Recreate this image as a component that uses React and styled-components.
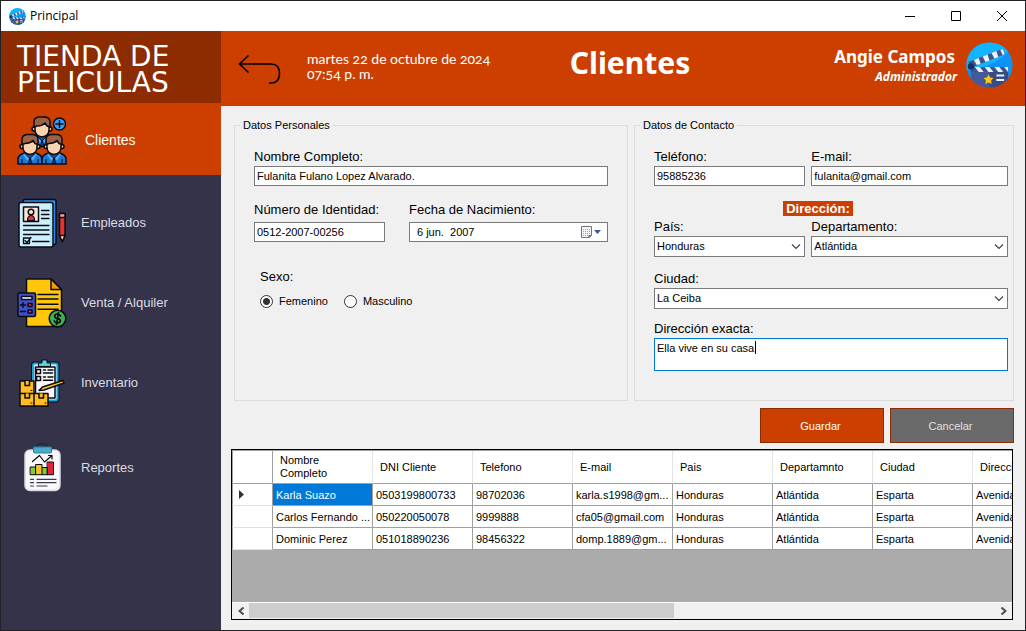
import React, { useState } from 'react';
import styled, { createGlobalStyle, css } from 'styled-components';

const orange = '#cc3f00';
const brown = '#8c2c00';
const navy = '#34334a';
const sans = '"Liberation Sans", Arial, sans-serif';
const humanist = '"Noto Sans", "Open Sans", sans-serif';

const GlobalStyle = createGlobalStyle`
  *, *::before, *::after { box-sizing: border-box; }
  body { margin: 0; background: #f0f0f0; color: #000; font: 11px/14px ${sans}; }
  button, input, select, textarea { font: inherit; color: inherit; margin: 0; border-radius: 0; }
`;

const Window = styled.div`
  display: flex;
  flex-direction: column;
  min-height: 100vh;
  border: 1px solid #222126;
`;

const TitleBar = styled.div`
  display: flex;
  align-items: center;
  height: 30px;
  padding-left: 8px;
  gap: 4px;
  background: #fff;
  font: 12px/16px "Open Sans", sans-serif;
`;

const WindowTitle = styled.span`
  flex: 1;
`;

const WindowControls = styled.div`
  display: flex;
`;

const WindowButton = styled.button`
  display: grid;
  place-items: center;
  width: 46px;
  height: 30px;
  padding: 0;
  border: 0;
  background: none;
`;

const Shell = styled.div`
  display: flex;
  flex: 1;
`;

const Sidebar = styled.aside`
  flex: none;
  width: 220px;
  background: ${navy};
`;

const Brand = styled.div`
  display: flex;
  align-items: center;
  height: 72px;
  padding: 6px 16px 0;
  background: ${brown};
  color: #fff;
  font: 28px/26px "DejaVu Sans", sans-serif;
`;

const NavList = styled.nav`
  display: flex;
  flex-direction: column;
`;

const NavLink = styled.a`
  display: flex;
  align-items: center;
  gap: 14px;
  height: ${(p) => p.$height}px;
  padding-left: 16px;
  color: #dcdce2;
  font-size: 13px;
  line-height: 16px;
  text-decoration: none;
  ${(p) =>
    p.$active &&
    css`
      gap: 18px;
      margin-bottom: 8px;
      padding-top: 2px;
      background: ${orange};
      color: #fff;
      font-size: 14px;
    `}
`;

const Main = styled.main`
  display: flex;
  flex: 1;
  flex-direction: column;
  min-width: 0;
  background: #f0f0f0;
`;

const Header = styled.header`
  display: grid;
  grid-template-columns: 1fr auto 1fr;
  align-items: center;
  height: 75px;
  padding-left: 14px;
  background: ${orange};
  color: #fff;
  font-family: ${humanist};
`;

const HeaderStart = styled.div`
  display: flex;
  align-items: center;
  gap: 24px;
`;

const BackButton = styled.button`
  display: flex;
  padding: 2px;
  border: 0;
  background: none;
`;

const DateText = styled.time`
  padding-bottom: 6px;
  font: 14px/15px Lato, sans-serif;
  font-variant-numeric: oldstyle-nums;
`;

const PageTitle = styled.h1`
  margin: 0;
  padding-bottom: 12px;
  font-size: 30px;
  line-height: 36px;
`;

const UserBlock = styled.div`
  display: flex;
  align-items: center;
  justify-content: flex-end;
  gap: 9px;
  padding: 0 12px 8px 0;
`;

const UserText = styled.div`
  padding-top: 2px;
  text-align: right;
`;

const UserName = styled.div`
  padding-right: 2px;
  font-size: 17px;
  font-weight: 700;
  line-height: 22px;
`;

const UserRole = styled.div`
  font-size: 12px;
  font-style: italic;
  font-weight: 700;
  line-height: 18px;
`;

const Form = styled.form`
  padding: 12px 11px 6px 13px;
`;

const Groups = styled.div`
  display: grid;
  grid-template-columns: minmax(0, 394fr) minmax(0, 380fr);
  gap: 6px;
`;

const Group = styled.fieldset`
  min-width: 0;
  margin: 0;
  padding: 16px ${(p) => p.$right}px 29px 19px;
  border: 1px solid #dcdcdc;
`;

const GroupLegend = styled.legend`
  margin-left: -14px;
  padding: 0 3px;
  line-height: 14px;
`;

const FieldRow = styled.div`
  display: grid;
  grid-template-columns: ${(p) => p.$columns || '1fr'};
  column-gap: ${(p) => p.$gap || 0}px;
  margin-top: ${(p) => p.$top || 0}px;
`;

const Field = styled.div`
  display: flex;
  flex-direction: column;
  min-width: 0;
  gap: ${(p) => p.$gap || 0}px;
`;

const Label = styled.label`
  font-size: 13px;
  line-height: 18px;
`;

const control = css`
  width: 100%;
  border: 1px solid #7a7a7a;
  background: #fff;
  outline: 0;
`;

const TextInput = styled.input`
  ${control}
  height: 20px;
  padding: 0 2px;
`;

const DateBox = styled.div`
  ${control}
  display: flex;
  align-items: center;
  height: 20px;
`;

const DateInput = styled.input`
  flex: 1;
  min-width: 0;
  padding: 0 7px;
  border: 0;
  background: none;
  outline: 0;
`;

const CalendarButton = styled.button`
  display: flex;
  align-items: center;
  padding: 0 5px;
  border: 0;
  background: none;
`;

const SelectBox = styled.div`
  position: relative;
  svg {
    position: absolute;
    right: 4px;
    top: 8px;
    pointer-events: none;
  }
`;

const Select = styled.select`
  ${control}
  display: block;
  height: 21px;
  padding: 0 2px 1px;
  appearance: none;
`;

const AreaBox = styled.div`
  position: relative;
  display: flex;
`;

const TextArea = styled.textarea`
  ${control}
  height: 33px;
  padding: 2px;
  border-color: #0078d7;
  resize: none;
  caret-color: transparent;
`;

const Caret = styled.span`
  position: absolute;
  left: 101px;
  top: 3px;
  width: 1px;
  height: 13px;
  background: #000;
`;

const AddressRow = styled.div`
  display: flex;
  justify-content: center;
  padding-right: 26px;
  margin: 15px 0 2px;
`;

const AddressTitle = styled.span`
  padding: 0 3px;
  background: ${orange};
  color: #fff;
  font-size: 13px;
  font-weight: 700;
  line-height: 15px;
`;

const RadioGroup = styled.div`
  display: flex;
  flex-direction: column;
  gap: 8px;
  margin-top: 26px;
  padding-left: 6px;
`;

const RadioTitle = styled.span`
  font-size: 13px;
  line-height: 18px;
`;

const RadioRow = styled.div`
  display: flex;
  gap: 16px;
`;

const RadioLabel = styled.label`
  display: flex;
  align-items: center;
  gap: 6px;
`;

const Radio = styled.input`
  appearance: none;
  width: 13px;
  height: 13px;
  border: 1px solid #333;
  border-radius: 50%;
  background: #fff;
  &:checked {
    background: radial-gradient(circle, #333 3px, #fff 4px);
  }
`;

const Actions = styled.div`
  display: flex;
  justify-content: flex-end;
  gap: 6px;
  margin-top: 7px;
`;

const ActionButton = styled.button`
  width: 124px;
  height: 35px;
  padding: 0 9px 0 6px;
  border: 1px solid ${brown};
  background: ${(p) => (p.$muted ? '#696969' : orange)};
  color: ${(p) => (p.$muted ? '#e0e0e0' : '#fff')};
`;

const Grid = styled.section`
  display: flex;
  flex: 1;
  flex-direction: column;
  margin: 0 12px 10px 10px;
  border: 1px solid #000;
  background: #ababab;
`;

const GridViewport = styled.div`
  flex: 1;
  overflow: hidden;
  border-top: 1px solid #a0a0a0;
`;

const Table = styled.table`
  width: 841px;
  border-collapse: separate;
  border-spacing: 0;
  table-layout: fixed;
`;

const HeadCell = styled.th`
  height: 33px;
  padding: 0 7px;
  border-right: 1px solid #e2e2e2;
  border-bottom: 1px solid #a0a0a0;
  background: #fff;
  font-weight: 400;
  line-height: 13px;
  text-align: left;
`;

const MarkerCell = styled.td`
  width: 41px;
  height: 22px;
  padding: 0 6px;
  border: solid #a0a0a0;
  border-width: 0 1px 1px 1px;
  border-bottom-color: ${(p) => (p.$strong ? '#a0a0a0' : '#e2e2e2')};
  background: #fff;
  svg { display: block; }
`;

const Cell = styled.td`
  height: 22px;
  padding: 0 3px;
  overflow: hidden;
  border: solid #a0a0a0;
  border-width: 0 1px 1px 0;
  background: ${(p) => (p.$selected ? '#0078d7' : '#fff')};
  color: ${(p) => (p.$selected ? '#fff' : '#000')};
  white-space: nowrap;
`;

const ScrollBar = styled.div`
  display: flex;
  height: 17px;
  border-top: 1px solid #fff;
  background: #f0f0f0;
`;

const ScrollButton = styled.button`
  display: grid;
  flex: none;
  place-items: center;
  width: 17px;
  padding: 0;
  border: 0;
  background: none;
`;

const ScrollTrack = styled.div`
  flex: 1;
  padding-bottom: 1px;
`;

const ScrollThumb = styled.div`
  width: 57%;
  height: 100%;
  background: #cdcdcd;
`;

function ClapperIcon({ width, height }) {
  return (
    <svg width={width} height={height} viewBox="0 0 48 46" preserveAspectRatio="none" aria-hidden="true">
      <defs>
        <clipPath id={`disc${width}`}><ellipse cx="24" cy="23" rx="23.6" ry="22.6" /></clipPath>
      </defs>
      <g clipPath={`url(#disc${width})`}>
        <path fill="#0c93f5" d="M0 0h48v46H0z" />
        <path fill="#12b4ff" d="M0 0h48C44 15 24 26 0 28z" />
        <path fill="#3e548f" d="M2 20 37 7l3 5L6 25.500z" />
        <path fill="#e8f3fb" d="m8 18 5-2 2 6-4 1zM17 14.500l5-2 2 6-4 1.500zM26 11l5-2 2 6-4 1.500zM35 8l2.500-1 2 5-2 1z" />
        <path fill="#46599a" d="M5 25h38v22H5z" />
        <path fill="#394b82" d="M24 30h19v17H24z" />
        <path fill="#3e548f" d="M5 25h38v5H5z" />
        <path fill="#e8f3fb" d="M9 25h5l4 5h-5zM19 25h5l4 5h-5zM29 25h5l4 5h-5zM39 25h4v5z" />
        <circle cx="5" cy="24.500" r="3.200" fill="#1d2f5c" />
        <path fill="#ffc90e" d="m23 32.500 1.600 3 3.400.5-2.400 2.500.6 3.500-3.200-1.500-3.200 1.500.6-3.500-2.400-2.500 3.400-.5z" />
        <path stroke="#e8f3fb" strokeWidth="2" d="M31 33.500h8M31 38h8" />
      </g>
    </svg>
  );
}

const Icon = ({ children }) => (
  <svg width="50" height="50" viewBox="0 0 50 50" fill="none" stroke="#0b0b14" strokeWidth="1.500" strokeLinejoin="round" strokeLinecap="round" aria-hidden="true">
    {children}
  </svg>
);

const Person = ({ x, y }) => (
  <g transform={`translate(${x} ${y})`}>
    <path fill="#1f78d8" d="M-12 29.500V25q0-4 4-5.500l5-2H3l5 2q4 1.500 4 5.500v4.500z" />
    <path fill="#55aaf5" stroke="none" d="m-4 18 4 6 4-6 3 2-4 6-3-3-3 3-4-6z" />
    <path fill="#0f55a8" strokeWidth="1" d="m-5 19 5 5 5-5M0 24l-1.500 5h3zM-8 25v4M8 25v4" />
    <circle cx="-8" cy="12" r="2" fill="#f0b98d" />
    <circle cx="8" cy="12" r="2" fill="#f0b98d" />
    <path fill="#fbd3ae" d="M-7 7H7v6q0 6-7 7-7-1-7-7z" />
    <path fill="#9a6240" d="M-8 10V5q0-4.500 5-5h6q5 .5 5 5v5l-3-1-2-3q-3 3-8 3z" />
  </g>
);

const ClientsIcon = () => (
  <Icon>
    <Person x={25} y={2} />
    <Person x={13} y={19.500} />
    <Person x={37} y={19.500} />
    <circle cx="42.500" cy="9" r="6" fill="#36a0f5" />
    <path d="M42.500 5.500v7M39 9h7" />
  </Icon>
);

const EmployeesIcon = () => (
  <Icon>
    <rect x="6" y="1.500" width="33" height="45" rx="2" fill="#2f8fee" />
    <rect x="2" y="4.500" width="34" height="44.500" rx="2" fill="#cdf0fb" />
    <path stroke="#a5dcf2" d="M34 6.500v40" />
    <path fill="#fde4d3" d="M6.500 9h15v14.500h-15z" />
    <path fill="#e0303a" strokeWidth="1.200" d="M10.500 22.500q0-5 3.500-5t3.500 5z" />
    <circle cx="14" cy="14" r="2.800" fill="#fde4d3" />
    <path strokeWidth="1.300" d="M24.500 12.500H32M24.500 16.500H32M24.500 20.500H32M6.500 27.500H32M6.500 32H32M6.500 36.500H32M15.500 43.500H32M6.500 40h6v5.500h-6zM8 42.500l2 2 4-5" />
    <path fill="#e3342f" d="M42.500 15.500h5.500v22l-2.700 6-2.800-6z" />
    <path fill="#f7a3a0" d="M42.500 15.500h5.500v4h-5.500z" />
    <path fill="#fde4d3" d="M42.500 37.500h5.500l-2.700 6z" />
  </Icon>
);

const SalesIcon = () => (
  <Icon>
    <path fill="#ffc60a" d="M9.500 1h24.500l10.500 10.500V48.500h-35z" />
    <path fill="#f59a0c" d="M34 1v10.500h10.500z" />
    <path d="M21 16.500h20M21 21h20M21 26.300h20M21 31.300h20" />
    <rect x="1" y="15" width="17.500" height="23.500" rx="1.500" fill="#3f51c4" />
    <path fill="#fff" d="M4.500 18.500h10.500v3H4.500z" />
    <path d="M3.500 27h5M6 24.800v4.400M3.500 33.500h5" />
    <rect x="11" y="25.500" width="4" height="3" fill="#ee2a6a" />
    <rect x="11" y="32" width="4" height="3" fill="#ee2a6a" />
    <circle cx="40.500" cy="40.500" r="8.300" fill="#3bb54a" />
    <path strokeWidth="1.700" d="M43.500 38q-1-2-3-2-2.800 0-2.800 2.300 0 1.900 2.800 2.200t2.800 2.300Q43.300 45 40.500 45q-2.300 0-3.200-2M41.500 34.500l-2 12" />
  </Icon>
);

const InventoryIcon = () => (
  <Icon>
    <rect x="16" y="5.500" width="24.500" height="37" rx="2" strokeWidth="4" />
    <rect x="16" y="5.500" width="24.500" height="37" rx="2" fill="#f2f2f6" stroke="#12a5de" strokeWidth="2" />
    <path fill="#f7f7fa" d="M18.500 9H38v31H18.500z" />
    <path fill="#62d8dc" strokeWidth="1" d="M21.500 8V5h3.500V2h5v3h3.500v3z" />
    <path d="M19.500 11.500h4v4h-4zM19.500 18.500h4v4h-4zM26.500 12h2M31 12h5M26.500 15h9M26.500 19h2M31 19h5M26.500 22.300h9" />
    <g fill="#ffbd1f">
      <path d="M3 23h14v12.500H3zM3 35.500h14V48H3zM17 35.500h14V48H17z" />
      <path d="M8 23v4.500h4.500V23M8 35.500V40h4.500v-4.500M22 35.500V40h4.500v-4.500" />
    </g>
    <path strokeWidth="1" d="M14 32.500h1M14 45h1M28 45h1" />
    <path fill="#ffc61f" d="m22 32.500 3.500-3.500L46 22.500l1 2.500-20 7z" />
  </Icon>
);

const ReportsIcon = () => (
  <Icon>
    <path stroke="#24233a" d="M20 3q0-2.500 5-2.500T30 3" />
    <rect x="8" y="7" width="35" height="40.500" rx="5" fill="#f8f8fb" stroke="#d8d8e0" />
    <rect x="16.500" y="4" width="18" height="6" rx="1" fill="#4aaccb" stroke="#2c7f9b" strokeWidth="1" />
    <path strokeWidth="1.200" d="m15.500 18.500 7-6 5 6.500 7.500-6.500M31.500 12.500H35V16" />
    <g strokeWidth="1">
      <path fill="#83cf2a" d="M13.500 24h5.500v7.700h-5.500zM25 24.500h5.500v7.200H25z" />
      <path fill="#fbc01e" d="M19 21.500h6v10.200h-6z" />
      <path fill="#e8203c" d="M30.500 19h6v12.700h-6z" />
    </g>
    <path stroke="#3a3a48" strokeWidth="1.200" d="M13.500 36.300h3M20 36.300h19M13.500 39.700h3M20 39.700h19M13.500 43h3M20 43h10" />
  </Icon>
);

const Chevron = () => (
  <svg width="10" height="6" viewBox="0 0 10 6" fill="none" stroke="#444" strokeWidth="1.200" aria-hidden="true">
    <path d="m1 .5 4 4 4-4" />
  </svg>
);

const navItems = [
  { label: 'Clientes', icon: ClientsIcon, height: 72, active: true },
  { label: 'Empleados', icon: EmployeesIcon, height: 80 },
  { label: 'Venta / Alquiler', icon: SalesIcon, height: 80 },
  { label: 'Inventario', icon: InventoryIcon, height: 80 },
  { label: 'Reportes', icon: ReportsIcon, height: 90 },
];

const columns = ['Nombre Completo', 'DNI Cliente', 'Telefono', 'E-mail', 'Pais', 'Departamnto', 'Ciudad', 'Dirección'];

const rows = [
  ['Karla Suazo', '0503199800733', '98702036', 'karla.s1998@gm...', 'Honduras', 'Atlántida', 'Esparta', 'Avenida'],
  ['Carlos Fernando ...', '050220050078', '9999888', 'cfa05@gmail.com', 'Honduras', 'Atlántida', 'Esparta', 'Avenida'],
  ['Dominic Perez', '051018890236', '98456322', 'domp.1889@gm...', 'Honduras', 'Atlántida', 'Esparta', 'Avenida'],
];

function TextField({ id, label, value, type = 'text', gap }) {
  return (
    <Field $gap={gap}>
      <Label htmlFor={id}>{label}</Label>
      <TextInput id={id} type={type} defaultValue={value} />
    </Field>
  );
}

function SelectField({ id, label, value }) {
  return (
    <Field>
      <Label htmlFor={id}>{label}</Label>
      <SelectBox>
        <Select id={id} defaultValue={value}>
          <option>{value}</option>
        </Select>
        <Chevron />
      </SelectBox>
    </Field>
  );
}

export default function App() {
  const [sex, setSex] = useState('Femenino');
  return (
    <Window>
      <GlobalStyle />
      <TitleBar>
        <ClapperIcon width={17} height={17} />
        <WindowTitle>Principal</WindowTitle>
        <WindowControls>
          <WindowButton aria-label="Minimizar">
            <svg width="10" height="10" stroke="#000"><path d="M0 5.500h10" /></svg>
          </WindowButton>
          <WindowButton aria-label="Maximizar">
            <svg width="10" height="10" fill="none" stroke="#000"><path d="M.5.5h9v9h-9z" /></svg>
          </WindowButton>
          <WindowButton aria-label="Cerrar">
            <svg width="10" height="10" stroke="#000"><path d="m0 0 10 10M10 0 0 10" /></svg>
          </WindowButton>
        </WindowControls>
      </TitleBar>
      <Shell>
        <Sidebar>
          <Brand>TIENDA DE PELICULAS</Brand>
          <NavList>
            {navItems.map(({ label, icon: NavIcon, height, active }) => (
              <NavLink key={label} href="#" $height={height} $active={active}>
                <NavIcon />
                {label}
              </NavLink>
            ))}
          </NavList>
        </Sidebar>
        <Main>
          <Header>
            <HeaderStart>
              <BackButton aria-label="Regresar">
                <svg width="44" height="30" viewBox="0 0 44 30" fill="none" stroke="#000" strokeWidth="1.600">
                  <path d="M11.500 1.500 2.500 10l9 8.500M2.500 10H34q8.500 0 8.500 9.500t-8.500 9.500h-2" />
                </svg>
              </BackButton>
              <DateText>
                martes 22 de octubre de 2024
                <br />
                07:54 p. m.
              </DateText>
            </HeaderStart>
            <PageTitle>Clientes</PageTitle>
            <UserBlock>
              <UserText>
                <UserName>Angie Campos</UserName>
                <UserRole>Administrador</UserRole>
              </UserText>
              <ClapperIcon width={47} height={46} />
            </UserBlock>
          </Header>
          <Form onSubmit={(e) => e.preventDefault()}>
            <Groups>
              <Group $right={19}>
                <GroupLegend>Datos Personales</GroupLegend>
                <TextField id="name" label="Nombre Completo:" value="Fulanita Fulano Lopez Alvarado." />
                <FieldRow $columns="131fr 199fr" $gap={24} $top={15}>
                  <TextField id="dni" label="Número de Identidad:" value="0512-2007-00256" gap={3} />
                  <Field $gap={3}>
                    <Label htmlFor="birth">Fecha de Nacimiento:</Label>
                    <DateBox>
                      <DateInput id="birth" type="text" defaultValue="6 jun.  2007" />
                      <CalendarButton type="button" aria-label="Abrir calendario">
                        <svg width="22" height="13" fill="none">
                          <path fill="#f4f4f8" stroke="#776f72" d="M1.500.5h10v9l-2 2h-8z" />
                          <path stroke="#9aa6c4" strokeDasharray="1 1" d="M3 3.500h7M3 5.500h7M3 7.500h7M3 9.500h5" />
                          <path fill="#776f72" d="M8.500 12V9H12z" />
                          <path fill="#3b5998" d="M14 4h7l-3.500 4z" />
                        </svg>
                      </CalendarButton>
                    </DateBox>
                  </Field>
                </FieldRow>
                <RadioGroup role="radiogroup" aria-labelledby="sex">
                  <RadioTitle id="sex">Sexo:</RadioTitle>
                  <RadioRow>
                    {['Femenino', 'Masculino'].map((option) => (
                      <RadioLabel key={option}>
                        <Radio type="radio" name="sex" checked={sex === option} onChange={() => setSex(option)} />
                        {option}
                      </RadioLabel>
                    ))}
                  </RadioRow>
                </RadioGroup>
              </Group>
              <Group $right={5}>
                <GroupLegend>Datos de Contacto</GroupLegend>
                <FieldRow $columns="10fr 13fr" $gap={6}>
                  <TextField id="phone" type="tel" label="Teléfono:" value="95885236" />
                  <TextField id="email" type="email" label="E-mail:" value="fulanita@gmail.com" />
                </FieldRow>
                <AddressRow>
                  <AddressTitle>Dirección:</AddressTitle>
                </AddressRow>
                <FieldRow $columns="10fr 13fr" $gap={6}>
                  <SelectField id="country" label="País:" value="Honduras" />
                  <SelectField id="state" label="Departamento:" value="Atlántida" />
                </FieldRow>
                <FieldRow $top={13}>
                  <SelectField id="city" label="Ciudad:" value="La Ceiba" />
                </FieldRow>
                <FieldRow $top={11}>
                  <Field>
                    <Label htmlFor="address">Dirección exacta:</Label>
                    <AreaBox>
                      <TextArea id="address" defaultValue="Ella vive en su casa" />
                      <Caret />
                    </AreaBox>
                  </Field>
                </FieldRow>
              </Group>
            </Groups>
            <Actions>
              <ActionButton type="submit">Guardar</ActionButton>
              <ActionButton type="button" $muted>Cancelar</ActionButton>
            </Actions>
          </Form>
          <Grid>
            <GridViewport>
              <Table>
                <thead>
                  <tr>
                    <MarkerCell $strong />
                    {columns.map((name) => (
                      <HeadCell key={name} scope="col">{name}</HeadCell>
                    ))}
                  </tr>
                </thead>
                <tbody>
                  {rows.map((row, r) => (
                    <tr key={row[0]}>
                      <MarkerCell>
                        {r === 0 && (
                          <svg width="5" height="9"><path fill="#333" d="M0 0v9l5-4.500z" /></svg>
                        )}
                      </MarkerCell>
                      {row.map((value, c) => (
                        <Cell key={columns[c]} $selected={r === 0 && c === 0}>{value}</Cell>
                      ))}
                    </tr>
                  ))}
                </tbody>
              </Table>
            </GridViewport>
            <ScrollBar>
              <ScrollButton aria-label="Desplazar a la izquierda">
                <svg width="6" height="8" fill="none" stroke="#505050" strokeWidth="2"><path d="M5.500.5 1.500 4l4 3.500" /></svg>
              </ScrollButton>
              <ScrollTrack>
                <ScrollThumb />
              </ScrollTrack>
              <ScrollButton aria-label="Desplazar a la derecha">
                <svg width="6" height="8" fill="none" stroke="#505050" strokeWidth="2"><path d="m.5.5 4 3.500-4 3.500" /></svg>
              </ScrollButton>
            </ScrollBar>
          </Grid>
        </Main>
      </Shell>
    </Window>
  );
}
